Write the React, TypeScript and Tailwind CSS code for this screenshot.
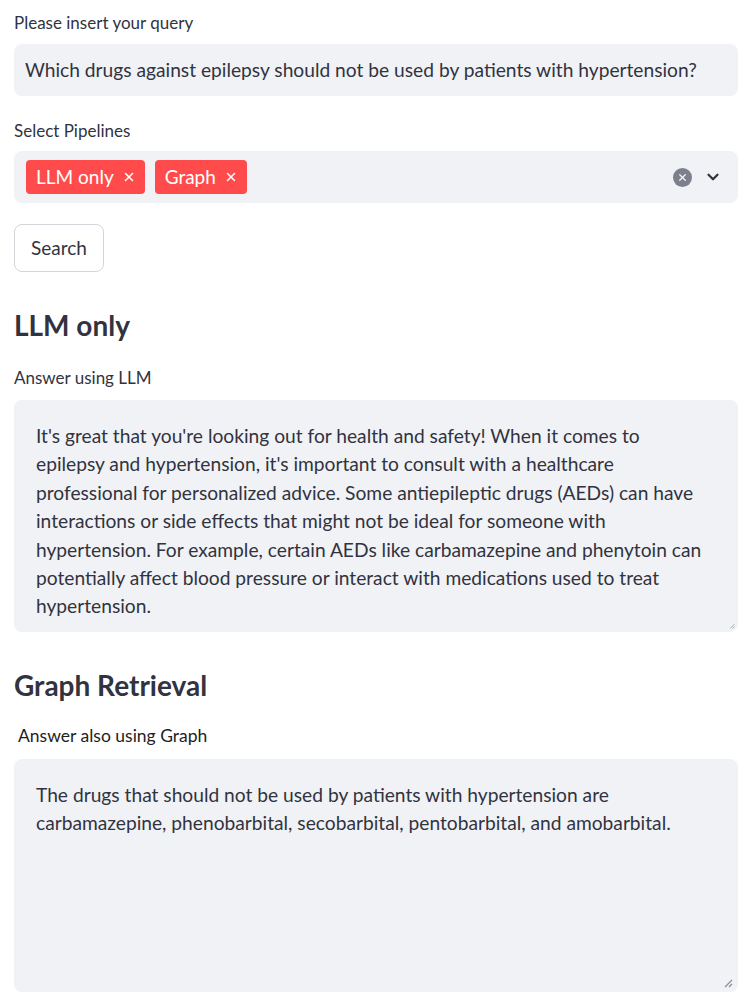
import { X, ChevronDown } from 'lucide-react';

const font = "font-['Lato','Noto_Sans',sans-serif]";

const llmLines = [
  "It's great that you're looking out for health and safety! When it comes to",
  "epilepsy and hypertension, it's important to consult with a healthcare",
  'professional for personalized advice. Some antiepileptic drugs (AEDs) can have',
  'interactions or side effects that might not be ideal for someone with',
  'hypertension. For example, certain AEDs like carbamazepine and phenytoin can',
  'potentially affect blood pressure or interact with medications used to treat',
  'hypertension.',
];

const graphLines = [
  'The drugs that should not be used by patients with hypertension are',
  'carbamazepine, phenobarbital, secobarbital, pentobarbital, and amobarbital.',
];

function Chip({ label }: { label: string }) {
  return (
    <span className="flex h-[34px] items-center gap-[8px] rounded-[4px] bg-[#ff4b4b] pl-[10px] pr-[9px] text-[19px] text-white">
      {label}
      <X className="h-[14px] w-[14px]" strokeWidth={2.5} />
    </span>
  );
}

function Resize({ small }: { small?: boolean }) {
  return (
    <svg
      viewBox="0 0 10 10"
      className={`absolute ${small ? 'bottom-[3px] right-[3px] h-[6px] w-[6px]' : 'bottom-[4px] right-[5px] h-[10px] w-[10px]'}`}
      aria-hidden="true"
    >
      <path d="M9 2 2 9M9 6 6 9" stroke="#8a8d96" strokeWidth="1.2" fill="none" />
    </svg>
  );
}

function Answer({ lines, height, small }: { lines: string[]; height: string; small?: boolean }) {
  return (
    <div className={`relative rounded-[8px] bg-[#f0f2f6] px-[22px] pt-[22px] text-[19.2px] leading-[28.4px] text-[#31333f] ${height}`}>
      {lines.map((l) => (
        <div key={l} className="whitespace-nowrap">
          {l}
        </div>
      ))}
      <Resize small={small} />
    </div>
  );
}

export default function App() {
  return (
    <div className={`${font} min-h-[1003px] w-[752px] bg-white px-[14px] pt-[12px] text-[#31333f]`}>
      <p className="text-[17px] leading-[22px]">Please insert your query</p>
      <div className="mt-[10px] flex h-[52px] items-center rounded-[8px] bg-[#f0f2f6] px-[11px] text-[19.2px]">
        Which drugs against epilepsy should not be used by patients with hypertension?
      </div>

      <p className="mt-[24px] text-[17px] leading-[22px]">Select Pipelines</p>
      <div className="mt-[9px] flex h-[52px] items-center rounded-[8px] bg-[#f0f2f6] pl-[12px] pr-[16px]">
        <div className="flex flex-1 gap-[10px]">
          <Chip label="LLM only" />
          <Chip label="Graph" />
        </div>
        <span className="flex h-[19px] w-[19px] items-center justify-center rounded-full bg-[#7d7f8c]">
          <X className="h-[11px] w-[11px] text-[#f0f2f6]" strokeWidth={3} />
        </span>
        <ChevronDown className="ml-[12px] h-[18px] w-[18px] text-[#31333f]" strokeWidth={3} />
      </div>

      <button
        type="button"
        className="mt-[21px] flex h-[48px] w-[90px] items-center justify-center rounded-[8px] border border-[#d3d5db] bg-white text-[19px]"
      >
        Search
      </button>

      <h2 className="mt-[33px] text-[28px] font-bold leading-[40px]">LLM only</h2>
      <p className="mt-[22px] text-[17px] leading-[22px]">Answer using LLM</p>
      <div className="mt-[11px]">
        <Answer lines={llmLines} height="h-[232px]" small />
      </div>

      <h2 className="mt-[33px] text-[28px] font-bold leading-[40px]">Graph Retrieval</h2>
      <p className="mt-[20px] pl-[4px] text-[17.5px] leading-[22px] text-[#1e1e1e]">Answer also using Graph</p>
      <div className="mt-[12px]">
        <Answer lines={graphLines} height="h-[233px]" />
      </div>
    </div>
  );
}
